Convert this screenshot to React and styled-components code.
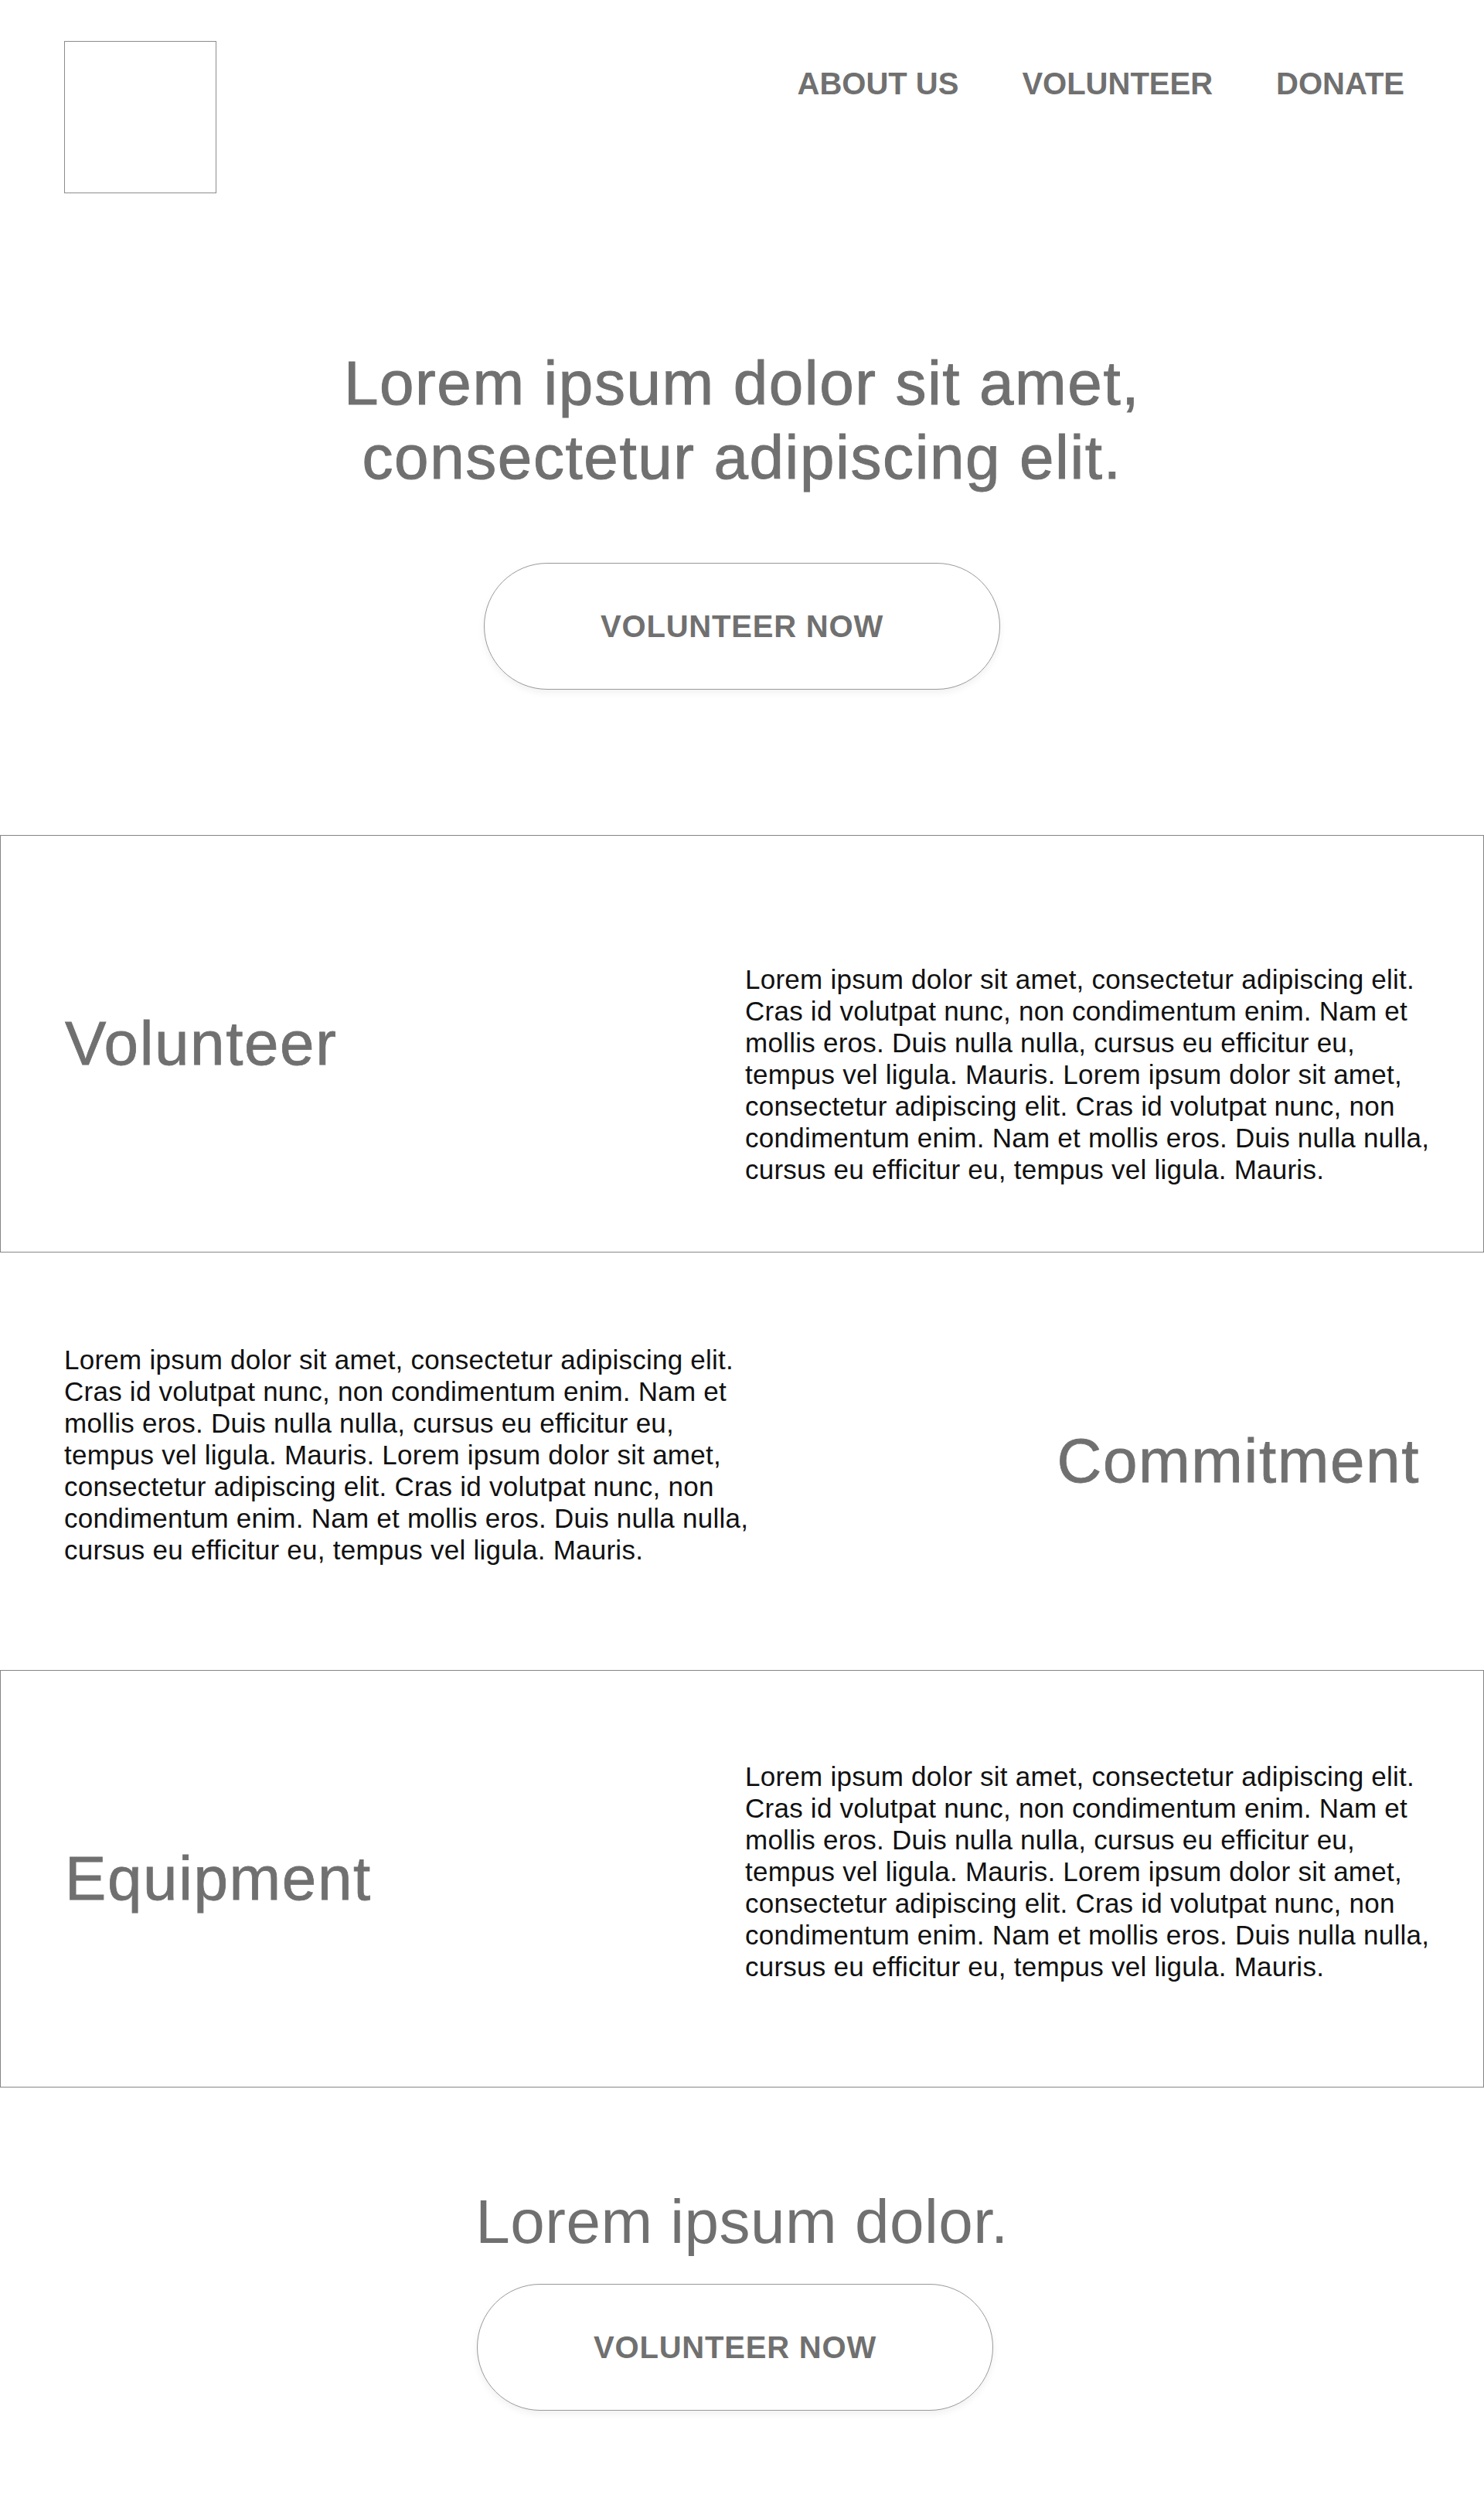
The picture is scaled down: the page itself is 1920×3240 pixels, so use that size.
import React from "react";
import styled, { createGlobalStyle } from "styled-components";

const GlobalStyle = createGlobalStyle`
  * {
    box-sizing: border-box;
  }
  body {
    margin: 0;
    background: #ffffff;
    font-family: "Liberation Sans", Arial, Helvetica, sans-serif;
  }
`;

const lorem =
  "Lorem ipsum dolor sit amet, consectetur adipiscing elit.\nCras id volutpat nunc, non condimentum enim. Nam et\nmollis eros. Duis nulla nulla, cursus eu efficitur eu,\ntempus vel ligula. Mauris. Lorem ipsum dolor sit amet,\nconsectetur adipiscing elit. Cras id volutpat nunc, non\ncondimentum enim. Nam et mollis eros. Duis nulla nulla,\ncursus eu efficitur eu, tempus vel ligula. Mauris.";

const secciones = [
  { titulo: "Volunteer", bordered: true, reverse: false, shift: 78 },
  { titulo: "Commitment", bordered: false, reverse: true, shift: -18 },
  { titulo: "Equipment", bordered: true, reverse: false, shift: -20 },
];

export default function App() {
  return (
    <Page>
      <GlobalStyle />
      <Header>
        <Logo />
        <Nav>
          <NavLink href="#">ABOUT US</NavLink>
          <NavLink href="#">VOLUNTEER</NavLink>
          <NavLink href="#">DONATE</NavLink>
        </Nav>
      </Header>

      <Hero>
        <HeroTitle>
          Lorem ipsum dolor sit amet,
          <br />
          consectetur adipiscing elit.
        </HeroTitle>
        <PillButton $top={88}>VOLUNTEER NOW</PillButton>
      </Hero>

      {secciones.map((item) => (
        <Band key={item.titulo} $bordered={item.bordered}>
          {item.reverse ? (
            <>
              <Body $shift={item.shift}>{lorem}</Body>
              <BandTitle $align="right">{item.titulo}</BandTitle>
            </>
          ) : (
            <>
              <BandTitle>{item.titulo}</BandTitle>
              <Body $shift={item.shift}>{lorem}</Body>
            </>
          )}
        </Band>
      ))}

      <Cta>
        <CtaTitle>Lorem ipsum dolor.</CtaTitle>
        <PillButton $top={32} $nudge={18}>
          VOLUNTEER NOW
        </PillButton>
      </Cta>
    </Page>
  );
}

const Page = styled.div`
  width: 1920px;
  background: #ffffff;
`;

const Header = styled.header`
  display: flex;
  justify-content: space-between;
  align-items: flex-start;
  padding: 53px 103px 0 83px;
`;

const Logo = styled.div`
  width: 197px;
  height: 197px;
  border: 1px solid #8c8c8c;
`;

const Nav = styled.nav`
  display: flex;
  gap: 82px;
  margin-top: 35px;
`;

const NavLink = styled.a`
  font-size: 40px;
  line-height: 40px;
  font-weight: 700;
  color: #707070;
  text-decoration: none;
`;

const Hero = styled.section`
  display: flex;
  flex-direction: column;
  align-items: center;
  padding: 198px 0 188px;
`;

const HeroTitle = styled.h1`
  margin: 0;
  font-size: 80px;
  line-height: 96px;
  font-weight: 400;
  letter-spacing: 1.6px;
  color: #707070;
  text-align: center;
  -webkit-text-stroke: 1px #707070;
`;

const PillButton = styled.button`
  display: flex;
  align-items: center;
  justify-content: center;
  width: 668px;
  height: 164px;
  margin-top: ${(props) => props.$top}px;
  margin-right: ${(props) => props.$nudge || 0}px;
  border: 1px solid #9a9a9a;
  border-radius: 82px;
  background: #ffffff;
  box-shadow: 0 4px 10px rgba(0, 0, 0, 0.06);
  font-family: inherit;
  font-size: 40px;
  font-weight: 700;
  letter-spacing: 0.8px;
  color: #707070;
  cursor: pointer;
`;

const Band = styled.section`
  display: grid;
  grid-template-columns: minmax(0, 1fr) minmax(0, 1fr);
  column-gap: 8px;
  align-items: center;
  height: 540px;
  padding: 0 83px;
  border: ${(props) => (props.$bordered ? "1px solid #858585" : "none")};
`;

const BandTitle = styled.h2`
  margin: 0;
  font-size: 80px;
  line-height: 96px;
  font-weight: 400;
  letter-spacing: 1.6px;
  color: #707070;
  text-align: ${(props) => props.$align || "left"};
  -webkit-text-stroke: 0.8px #707070;
`;

const Body = styled.p`
  margin: 0;
  margin-top: ${(props) => (props.$shift > 0 ? props.$shift : 0)}px;
  margin-bottom: ${(props) => (props.$shift < 0 ? -props.$shift : 0)}px;
  font-size: 35px;
  line-height: 41px;
  letter-spacing: 0.25px;
  color: #111111;
  white-space: pre;
`;

const Cta = styled.section`
  display: flex;
  flex-direction: column;
  align-items: center;
  padding: 126px 0 123px;
`;

const CtaTitle = styled.h2`
  margin: 0;
  font-size: 80px;
  line-height: 96px;
  font-weight: 400;
  letter-spacing: 0.5px;
  color: #707070;
`;
